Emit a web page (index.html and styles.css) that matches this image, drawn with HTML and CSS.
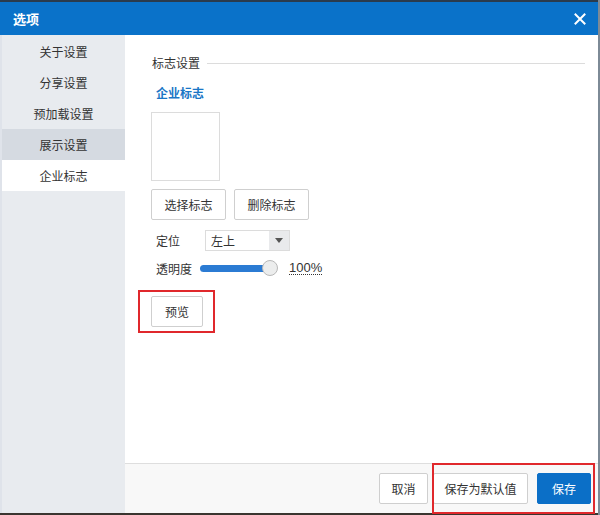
FILE: index.html
```html
<!DOCTYPE html>
<html>
<head>
<meta charset="utf-8">
<link rel="stylesheet" href="styles.css">
</head>
<body>
<div class="dialog">
  <div class="topstrip"></div>
  <div class="titlebar">
    <span class="title">选项</span>
    <svg class="close" width="12" height="12" viewBox="0 0 12 12"><path d="M1.5 1.5L10.5 10.5M10.5 1.5L1.5 10.5" stroke="#fff" stroke-width="2" stroke-linecap="square"/></svg>
  </div>
  <div class="body">
    <div class="sidebar">
      <div class="nav-item">关于设置</div>
      <div class="nav-item">分享设置</div>
      <div class="nav-item">预加载设置</div>
      <div class="nav-item hover">展示设置</div>
      <div class="nav-item active">企业标志</div>
    </div>
    <div class="main">
      <div class="content">
        <div class="section-head"><span>标志设置</span><div class="rule"></div></div>
        <div class="subtitle">企业标志</div>
        <div class="logo-box"></div>
        <div class="btn-row">
          <button class="btn btn-wide">选择标志</button>
          <button class="btn btn-wide">删除标志</button>
        </div>
        <div class="field-row">
          <span class="label">定位</span>
          <div class="select"><span class="select-text">左上</span><span class="select-arrow"><svg width="8" height="5" viewBox="0 0 8 5"><path d="M0 0H8L4 5Z" fill="#555"/></svg></span></div>
        </div>
        <div class="field-row slider-row">
          <span class="label">透明度</span>
          <div class="slider"><div class="track"></div><div class="thumb"></div></div>
          <span class="percent">100%</span>
        </div>
        <div class="preview-wrap">
          <button class="btn btn-preview">预览</button>
          <div class="mark mark-preview"></div>
        </div>
      </div>
      <div class="footer">
        <button class="btn btn-cancel">取消</button>
        <button class="btn btn-default">保存为默认值</button>
        <button class="btn btn-primary">保存</button>
        <div class="mark mark-footer"></div>
      </div>
    </div>
  </div>
  <div class="bottomstrip"></div>
</div>
</body>
</html>
```
FILE: styles.css
```css
* { box-sizing: border-box; }
html, body { margin: 0; padding: 0; }
body {
  font-family: "Noto Sans CJK SC", "Noto Sans", sans-serif;
  font-size: 12px;
  color: #333;
  background: #fff;
}
.dialog {
  width: 600px;
  height: 515px;
  display: flex;
  flex-direction: column;
  border-right: 2px solid #7d8a96;
}
.topstrip { height: 2px; background: #2a3b4d; }
.bottomstrip { height: 2px; background: #3a3530; }
.titlebar {
  height: 33px;
  background: #0a72c9;
  display: flex;
  align-items: center;
  justify-content: space-between;
  padding: 0 12px 0 13px;
}
.title { color: #fff; font-size: 13px; font-weight: bold; }
.close { display: block; }
.body { flex: 1; display: flex; min-height: 0; }
.sidebar {
  width: 125px;
  background: #e8ebef;
  border-left: 2px solid #dfe3ea;
  padding-top: 1px;
}
.nav-item {
  height: 31px;
  line-height: 31px;
  text-align: center;
  color: #333;
  font-size: 12px;
}
.nav-item.hover { background: #d5dae1; }
.nav-item.active { background: #fff; }
.main { flex: 1; display: flex; flex-direction: column; }
.content { flex: 1; padding: 20px 13px 0 26px; }
.section-head {
  display: flex;
  align-items: center;
  height: 16px;
  margin-left: 1px;
}
.section-head span { line-height: 16px; }
.rule { flex: 1; height: 1px; background: #dcdcdc; margin-left: 7px; }
.subtitle {
  margin: 14px 0 0 5px;
  line-height: 16px;
  color: #1a76c6;
  font-weight: bold;
}
.logo-box {
  width: 69px;
  height: 69px;
  border: 1px solid #dcdcdc;
  margin-top: 11px;
}
.btn {
  font-family: "Noto Sans CJK SC", "Noto Sans", sans-serif;
  font-size: 12px;
  color: #333;
  background: #fff;
  border: 1px solid #cfcfcf;
  border-radius: 2px;
  height: 31px;
  padding: 0;
}
.btn-row { display: flex; gap: 8px; margin-top: 8px; }
.btn-wide { width: 75px; }
.field-row { display: flex; align-items: center; margin-top: 10px; height: 21px; }
.label { width: 54px; padding-left: 5px; }
.select {
  width: 85px;
  height: 21px;
  border: 1px solid #dcdcdc;
  display: flex;
  background: #fff;
}
.select-text { flex: 1; padding-left: 5px; line-height: 19px; }
.select-arrow {
  width: 20px;
  background: #e9eaec;
  display: flex;
  align-items: center;
  justify-content: center;
}
.slider-row { margin-top: 8px; height: 18px; }
.slider-row .label { width: 49px; }
.slider { position: relative; width: 78px; height: 18px; }
.track {
  position: absolute;
  left: 0; top: 6px;
  width: 72px; height: 7px;
  background: #2b7bd3;
  border-radius: 4px;
}
.thumb {
  position: absolute;
  left: 62px; top: 1px;
  width: 16px; height: 16px;
  border-radius: 50%;
  background: #eceded;
  border: 1px solid #b8b8b8;
}
.percent {
  margin-left: 11px;
  font-family: "Liberation Sans", sans-serif;
  font-size: 13px;
  border-bottom: 1px dotted #333;
  line-height: 13px;
}
.preview-wrap { position: relative; margin-top: 19px; width: 52px; }
.btn-preview { width: 52px; display: block; }
.mark { position: absolute; border: 2px solid #e0282c; pointer-events: none; }
.mark-preview { left: -13px; top: -6px; width: 77px; height: 43px; }
.footer {
  position: relative;
  height: 50px;
  background: #f8f8f8;
  border-top: 1px solid #dedede;
  display: flex;
  justify-content: flex-end;
  align-items: flex-start;
  padding: 9px 7px 0 0;
  gap: 5px;
}
.btn-cancel { width: 49px; }
.btn-default { width: 95px; margin-right: 4px; }
.btn-primary { width: 54px; background: #0b6fc7; border-color: #0b6fc7; color: #fff; }
.mark-footer { right: 3px; top: -1px; width: 163px; height: 51px; }
```
